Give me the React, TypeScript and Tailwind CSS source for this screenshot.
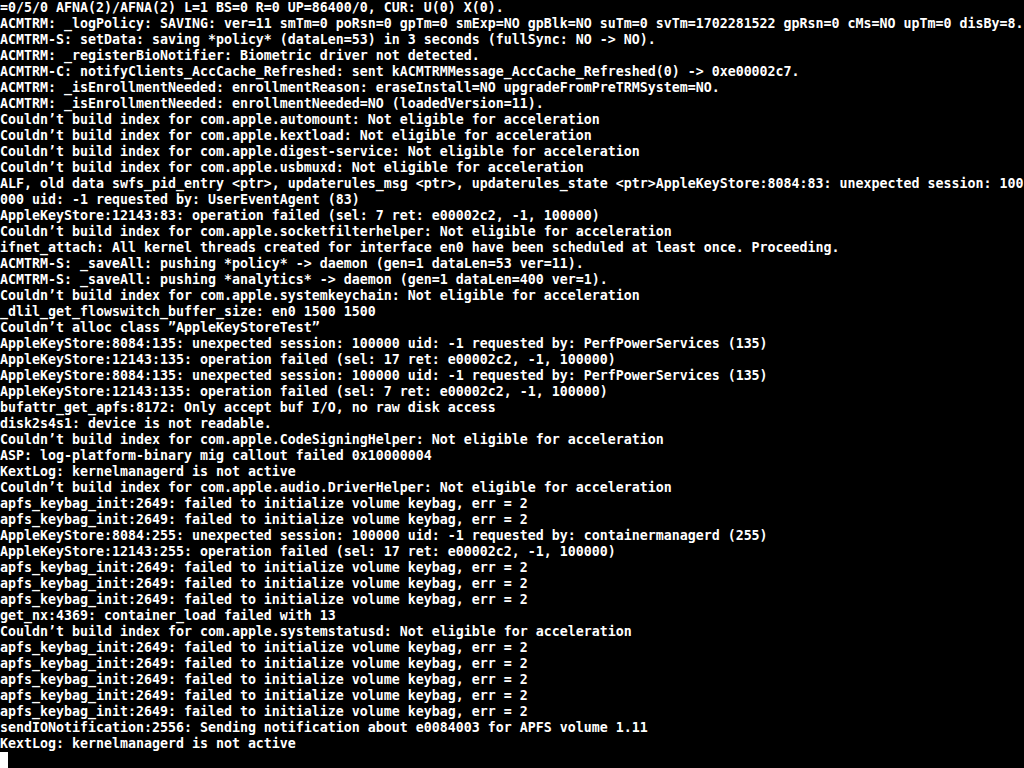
const lines = [
  '=0/5/0 AFNA(2)/AFNA(2) L=1 BS=0 R=0 UP=86400/0, CUR: U(0) X(0).',
  'ACMTRM: _logPolicy: SAVING: ver=11 smTm=0 poRsn=0 gpTm=0 smExp=NO gpBlk=NO suTm=0 svTm=1702281522 gpRsn=0 cMs=NO upTm=0 disBy=8.',
  'ACMTRM-S: setData: saving *policy* (dataLen=53) in 3 seconds (fullSync: NO -> NO).',
  'ACMTRM: _registerBioNotifier: Biometric driver not detected.',
  'ACMTRM-C: notifyClients_AccCache_Refreshed: sent kACMTRMMessage_AccCache_Refreshed(0) -> 0xe00002c7.',
  'ACMTRM: _isEnrollmentNeeded: enrollmentReason: eraseInstall=NO upgradeFromPreTRMSystem=NO.',
  'ACMTRM: _isEnrollmentNeeded: enrollmentNeeded=NO (loadedVersion=11).',
  'Couldn’t build index for com.apple.automount: Not eligible for acceleration',
  'Couldn’t build index for com.apple.kextload: Not eligible for acceleration',
  'Couldn’t build index for com.apple.digest-service: Not eligible for acceleration',
  'Couldn’t build index for com.apple.usbmuxd: Not eligible for acceleration',
  'ALF, old data swfs_pid_entry <ptr>, updaterules_msg <ptr>, updaterules_state <ptr>AppleKeyStore:8084:83: unexpected session: 100',
  '000 uid: -1 requested by: UserEventAgent (83)',
  'AppleKeyStore:12143:83: operation failed (sel: 7 ret: e00002c2, -1, 100000)',
  'Couldn’t build index for com.apple.socketfilterhelper: Not eligible for acceleration',
  'ifnet_attach: All kernel threads created for interface en0 have been scheduled at least once. Proceeding.',
  'ACMTRM-S: _saveAll: pushing *policy* -> daemon (gen=1 dataLen=53 ver=11).',
  'ACMTRM-S: _saveAll: pushing *analytics* -> daemon (gen=1 dataLen=400 ver=1).',
  'Couldn’t build index for com.apple.systemkeychain: Not eligible for acceleration',
  '_dlil_get_flowswitch_buffer_size: en0 1500 1500',
  'Couldn’t alloc class ”AppleKeyStoreTest”',
  'AppleKeyStore:8084:135: unexpected session: 100000 uid: -1 requested by: PerfPowerServices (135)',
  'AppleKeyStore:12143:135: operation failed (sel: 17 ret: e00002c2, -1, 100000)',
  'AppleKeyStore:8084:135: unexpected session: 100000 uid: -1 requested by: PerfPowerServices (135)',
  'AppleKeyStore:12143:135: operation failed (sel: 7 ret: e00002c2, -1, 100000)',
  'bufattr_get_apfs:8172: Only accept buf I/O, no raw disk access',
  'disk2s4s1: device is not readable.',
  'Couldn’t build index for com.apple.CodeSigningHelper: Not eligible for acceleration',
  'ASP: log-platform-binary mig callout failed 0x10000004',
  'KextLog: kernelmanagerd is not active',
  'Couldn’t build index for com.apple.audio.DriverHelper: Not eligible for acceleration',
  'apfs_keybag_init:2649: failed to initialize volume keybag, err = 2',
  'apfs_keybag_init:2649: failed to initialize volume keybag, err = 2',
  'AppleKeyStore:8084:255: unexpected session: 100000 uid: -1 requested by: containermanagerd (255)',
  'AppleKeyStore:12143:255: operation failed (sel: 17 ret: e00002c2, -1, 100000)',
  'apfs_keybag_init:2649: failed to initialize volume keybag, err = 2',
  'apfs_keybag_init:2649: failed to initialize volume keybag, err = 2',
  'apfs_keybag_init:2649: failed to initialize volume keybag, err = 2',
  'get_nx:4369: container_load failed with 13',
  'Couldn’t build index for com.apple.systemstatusd: Not eligible for acceleration',
  'apfs_keybag_init:2649: failed to initialize volume keybag, err = 2',
  'apfs_keybag_init:2649: failed to initialize volume keybag, err = 2',
  'apfs_keybag_init:2649: failed to initialize volume keybag, err = 2',
  'apfs_keybag_init:2649: failed to initialize volume keybag, err = 2',
  'apfs_keybag_init:2649: failed to initialize volume keybag, err = 2',
  'sendIONotification:2556: Sending notification about e0084003 for APFS volume 1.11',
  'KextLog: kernelmanagerd is not active',
]

export default function App() {
  return (
    <div className="h-screen w-full overflow-hidden bg-black text-white font-['DejaVu_Sans_Mono',monospace] text-[13.29px] font-bold">
      {lines.map((line, i) => (
        <div key={i} className="h-4 leading-4 whitespace-pre overflow-hidden">
          {line}
        </div>
      ))}
      <div className="h-4 w-2 bg-white" />
    </div>
  )
}
